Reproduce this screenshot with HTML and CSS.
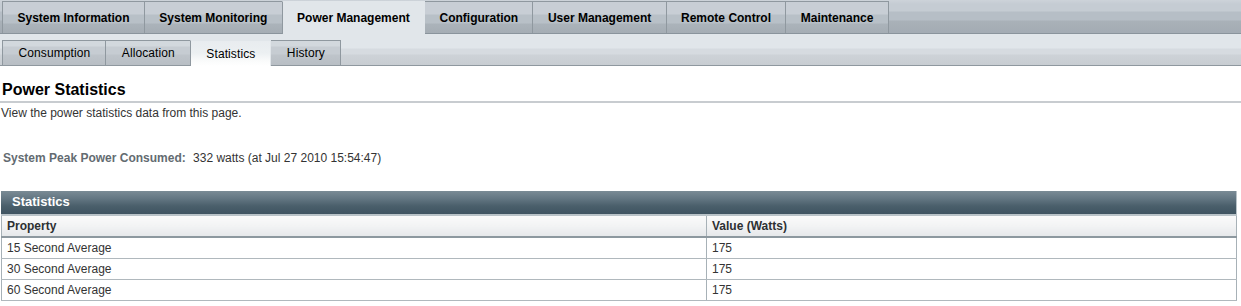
FILE: index.html
```html
<!DOCTYPE html>
<html lang="en">
<head>
    <meta charset="UTF-8">
    <title>Power Statistics</title>
    <link rel="stylesheet" href="styles.css">
</head>
<body>
    <div class="main-tabs">
        <a class="tab">System Information</a>
        <a class="tab">System Monitoring</a>
        <a class="tab selected">Power Management</a>
        <a class="tab">Configuration</a>
        <a class="tab">User Management</a>
        <a class="tab">Remote Control</a>
        <a class="tab">Maintenance</a>
    </div>
    <div class="sub-tabs">
        <a class="subtab">Consumption</a>
        <a class="subtab">Allocation</a>
        <a class="subtab selected">Statistics</a>
        <a class="subtab">History</a>
    </div>

    <div class="page-title">
        <h1>Power Statistics</h1>
    </div>
    <p class="help">View the power statistics data from this page.</p>

    <div class="peak">
        <span class="label">System Peak Power Consumed:</span>
        <span class="value">332 watts (at Jul 27 2010 15:54:47)</span>
    </div>

    <div class="stats">
        <div class="stats-title">Statistics</div>
        <table>
            <thead>
                <tr><th class="col-prop">Property</th><th>Value (Watts)</th></tr>
            </thead>
            <tbody>
                <tr><td>15 Second Average</td><td>175</td></tr>
                <tr><td>30 Second Average</td><td>175</td></tr>
                <tr><td>60 Second Average</td><td>175</td></tr>
            </tbody>
        </table>
    </div>
</body>
</html>
```

FILE: styles.css
```css
body {
    font-family: 'Liberation Sans', Arial, sans-serif;
    font-size: 12px;
    margin: 0;
    padding: 0;
    background-color: #fff;
    color: #333;
}

/* top level tabs */
.main-tabs {
    display: flex;
    height: 32px;
    padding: 1px 0 0 2px;
    background: linear-gradient(#cdd3d9 0, #c5ccd3 4px, #c5ccd3 11px, #b6bec6 12px, #b6bec6 20px, #a9b1b8 21px, #a4acb4 31px);
    border-bottom: 1px solid #8a949c;
}

.tab {
    display: flex;
    align-items: center;
    justify-content: center;
    height: 32px;
    padding: 0 14.25px 0 14.5px;
    font-weight: bold;
    color: #000;
    border: 1px solid #8f989f;
    border-bottom: none;
    margin-right: -1px;
    box-sizing: border-box;
    background: linear-gradient(#c8ced5 0, #c8ced5 12px, #b8c0c7 13px, #b8c0c7 21px, #abb3ba 22px, #a5adb4 31px);
}

.tab.selected {
    background: #e1e6ea;
    border-color: #e1e6ea;
    border-left-color: #8f989f;
    height: 33px;
    margin-bottom: -1px;
    position: relative;
    z-index: 1;
}

/* second level tabs */
.sub-tabs {
    display: flex;
    align-items: flex-end;
    height: 31px;
    padding: 0 0 0 2px;
    background: linear-gradient(#e1e6ea 0, #e1e6ea 14px, #d6dbe0 15px, #d6dbe0 20px, #cdd2d7 21px, #c8cdd2 31px);
    border-bottom: 1px solid #8f989f;
}

.subtab {
    display: flex;
    align-items: center;
    justify-content: center;
    height: 25px;
    padding: 0 15px 0 15.5px;
    border: 1px solid #8f989f;
    border-bottom: none;
    margin-right: -1px;
    box-sizing: border-box;
    color: #000;
    letter-spacing: 0.1px;
    background: linear-gradient(#d2d8dd 0, #d2d8dd 5px, #c6ccd2 6px, #c6ccd2 13px, #bec4ca 14px, #b8bec4 25px);
}

.subtab.selected {
    background: linear-gradient(#e8ecef 0, #ecf0f2 12px, #fafbfb 20px, #fff 25px);
    border-color: #e1e6ea;
    border-left-color: #8f989f;
    height: 26px;
    margin-bottom: -1px;
    position: relative;
    z-index: 1;
}

.page-title {
    margin: 14px 0 0 0;
    border-bottom: 2px solid #c8ccd0;
    padding: 0 0 2px 2px;
}

h1 {
    margin: 0;
    font-size: 16px;
    line-height: 19px;
    color: #000;
}

.help {
    margin: 3px 0 0 1px;
    line-height: 15px;
}

.peak {
    margin: 30px 0 0 3px;
    line-height: 15px;
}

.peak .label {
    color: #636b71;
    font-weight: bold;
    margin-right: 4px;
}

.stats {
    margin: 25px 4px 0 1px;
}

.stats-title {
    height: 23px;
    line-height: 22px;
    padding-left: 11px;
    color: #fff;
    font-weight: bold;
    font-size: 13px;
    background: linear-gradient(#7a8b95 0, #627581 8px, #4a5f6b 15px, #3f5461 23px);
    border-right: 1px solid #b9c3c8;
}

table {
    width: 100%;
    border-collapse: collapse;
    border: 1px solid #a7b1b7;
    border-top: 2px solid #b9c3c8;
}

th, td {
    height: 20px;
    padding: 0 0 0 5px;
    text-align: left;
    border-left: 1px solid #a7b1b7;
    border-bottom: 1px solid #b0b8bd;
    color: #333;
}

th {
    font-weight: bold;
    color: #2d3033;
    height: 20px;
    background: linear-gradient(#fafafa 0, #f2f3f4 10px, #e6e8ea 20px);
    border-bottom: 2px solid #8d989f;
}

.col-prop {
    width: 699px;
}
```
